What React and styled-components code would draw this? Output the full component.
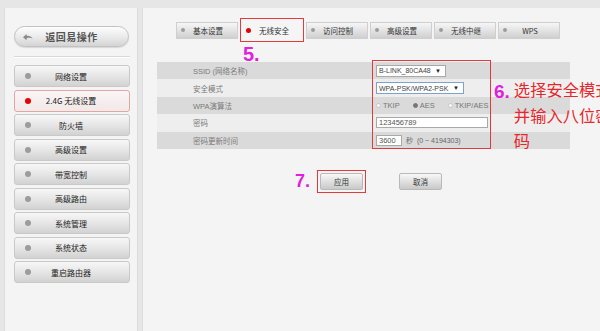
import React from 'react';
import styled, { createGlobalStyle } from 'styled-components';

const GlobalStyle = createGlobalStyle`
    html, body {
        margin: 0;
        padding: 0;
        background: #e6e6e6;
        overflow: hidden;
    }
    body {
        font-family: "Liberation Sans", "Noto Sans CJK SC", sans-serif;
    }
`;

const Page = styled.div`
    display: flex;
    gap: 4px;
    height: 331px;
    box-sizing: border-box;
    padding: 8px 0 0 4px;
`;

const Sidebar = styled.aside`
    width: 134px;
    flex-shrink: 0;
    box-sizing: border-box;
    background: #f4f4f4;
    border-left: 1px solid #dcdcdc;
    border-right: 1px solid #dcdcdc;
    padding: 18px 7px 0 9px;
`;

const BackButton = styled.div`
    height: 21px;
    width: 115px;
    box-sizing: border-box;
    display: flex;
    align-items: center;
    padding: 0 18px 0 8px;
    border: 1px solid #c2c2c2;
    border-radius: 11px;
    background: linear-gradient(#fdfdfd, #e9e9e9 55%, #d4d4d4);
    box-shadow: 0 1px 1px rgba(0, 0, 0, 0.12);
`;

const BackText = styled.span`
    flex: 1;
    text-align: center;
    font-family: "Noto Sans CJK SC", sans-serif;
    font-size: 10px;
    font-weight: 700;
    color: #555;
    letter-spacing: 0.5px;
`;

const Divider = styled.div`
    height: 1px;
    width: 116px;
    background: #d8d8d8;
    border-bottom: 1px solid #fff;
    margin: 9px 0 7px;
`;

const Menu = styled.nav`
    display: flex;
    flex-direction: column;
    gap: 2.5px;
`;

const MenuItem = styled.div`
    height: 22px;
    width: 116px;
    box-sizing: border-box;
    display: flex;
    align-items: center;
    padding: 0 18px 0 10px;
    border: 1px solid ${p => (p.$active ? '#e6a3a3' : '#c9c9c9')};
    border-radius: 3px;
    background: ${p =>
        p.$active
            ? 'linear-gradient(#fbf5f5, #f1e8e8)'
            : 'linear-gradient(#f7f7f7, #e6e6e6 50%, #d2d2d2)'};
`;

const Dot = styled.span`
    width: ${p => p.$size || 6}px;
    height: ${p => p.$size || 6}px;
    border-radius: 50%;
    flex-shrink: 0;
    background: ${p => (p.$active ? '#e80000' : '#9c9c9c')};
`;

const MenuLabel = styled.span`
    flex: 1;
    text-align: center;
    font-family: "Noto Sans CJK SC", sans-serif;
    font-size: 8px;
    color: #222;
`;

const Main = styled.main`
    flex: 1;
    background: #f4f4f4;
    border-left: 1px solid #dedede;
    display: flex;
    flex-direction: column;
    padding-top: 10px;
`;

const Tabs = styled.div`
    display: flex;
    align-items: center;
    gap: 2px;
    height: 24px;
    margin-left: 33px;
`;

const Tab = styled.div`
    position: relative;
    width: ${p => (p.$active ? 64 : 62)}px;
    height: ${p => (p.$active ? 24 : 17)}px;
    box-sizing: border-box;
    display: flex;
    align-items: center;
    padding: 0 6px 0 ${p => (p.$active ? 5 : 4)}px;
    border: ${p => (p.$active ? '1.5px solid #e03a3a' : '1px solid #cfcfcf')};
    background: ${p =>
        p.$active ? '#f5f5f5' : 'linear-gradient(#f6f6f6, #e3e3e3 50%, #cfcfcf)'};
`;

const TabLabel = styled.span`
    flex: 1;
    text-align: center;
    font-family: "Noto Sans CJK SC", sans-serif;
    font-size: 7.5px;
    color: #333;
`;

const Note = styled.span`
    font-family: "Liberation Sans", sans-serif;
    font-weight: 700;
    color: #e21ee0;
    font-size: ${p => p.$size || 19}px;
    line-height: 1;
`;

const StepFive = styled(Note)`
    position: absolute;
    left: 2px;
    top: 25px;
`;

const FormArea = styled.div`
    position: relative;
    margin: 20px 0 0 14px;
    width: 413px;
`;

const Row = styled.div`
    display: grid;
    grid-template-columns: 218px 1fr;
    align-items: center;
    height: 17.4px;
    background: ${p => (p.$dark ? '#dadada' : '#eeeeee')};
`;

const Label = styled.span`
    padding-left: 36px;
    font-family: "Liberation Sans", "Noto Sans CJK SC", sans-serif;
    font-size: 7.5px;
    color: #7a7a7a;
`;

const Value = styled.div`
    display: flex;
    align-items: center;
    gap: 4px;
    padding-left: 1px;
    font-size: 7px;
    color: #666;
    white-space: nowrap;
`;

const Select = styled.div`
    height: 12px;
    width: ${p => p.$width}px;
    flex-shrink: 0;
    box-sizing: border-box;
    display: flex;
    align-items: center;
    justify-content: space-between;
    padding: 0 4px 0 2px;
    background: #fff;
    border: 1px solid ${p => (p.$focus ? '#7da2ce' : '#a9a9a9')};
    font-size: 7px;
    color: #444;
    white-space: nowrap;
`;

const Caret = styled.span`
    font-size: 6px;
    color: #222;
`;

const Radio = styled.label`
    display: flex;
    align-items: center;
    gap: 2px;
    margin-right: 9px;
    font-size: 7.5px;
    color: #777;
`;

const RadioCircle = styled.span`
    width: 5px;
    height: 5px;
    border-radius: 50%;
    box-sizing: border-box;
    border: 1px solid ${p => (p.$on ? '#777' : '#c4c4c4')};
    background: ${p => (p.$on ? '#777' : '#fff')};
`;

const Input = styled.div`
    height: 11px;
    width: ${p => p.$width}px;
    flex-shrink: 0;
    box-sizing: border-box;
    display: flex;
    align-items: center;
    padding-left: 2px;
    background: #fff;
    border: 1px solid #a9a9a9;
    font-size: 7.5px;
    color: #555;
`;

const Highlight = styled.div`
    position: absolute;
    left: 215px;
    top: -2px;
    width: 119px;
    height: 89px;
    box-sizing: border-box;
    border: 1.5px solid #e03a3a;
    pointer-events: none;
`;

const Callout = styled.div`
    position: absolute;
    left: 337px;
    top: 20px;
    display: flex;
    align-items: flex-start;
    gap: 4px;
`;

const CalloutText = styled.span`
    width: 98px;
    font-family: "Noto Sans CJK SC", sans-serif;
    font-size: 16.3px;
    line-height: 25.5px;
    color: #e8262c;
    margin-top: -5px;
`;

const Actions = styled.div`
    display: flex;
    align-items: center;
    margin: 21px 0 0 152px;
`;

const ButtonFrame = styled.div`
    padding: 2px;
    margin-left: 7px;
    border: ${p => (p.$marked ? '1.5px solid #e03a3a' : '1.5px solid transparent')};
    & + & {
        margin-left: 30px;
    }
`;

const Button = styled.div`
    width: 41px;
    height: 15px;
    display: flex;
    align-items: center;
    justify-content: center;
    border: 1px solid #b9b9b9;
    border-radius: 2px;
    background: linear-gradient(#f8f8f8, #e0e0e0 50%, #c9c9c9);
    font-family: "Noto Sans CJK SC", sans-serif;
    font-size: 7.5px;
    color: #333;
`;

const menu = ['网络设置', '2.4G 无线设置', '防火墙', '高级设置', '带宽控制', '高级路由', '系统管理', '系统状态', '重启路由器'];
const tabs = ['基本设置', '无线安全', '访问控制', '高级设置', '无线中继', 'WPS'];

function BackIcon() {
    return (
        <svg width="10" height="8" viewBox="0 0 10 8">
            <path d="M0 4.2 L3.6 1 L3.6 2.9 C6.5 2.7 8.6 3.6 9.8 6.2 C8.4 4.9 6.6 4.5 3.6 5.2 L3.6 7.2 Z" fill="#8a8a8a" />
        </svg>
    );
}

export default function App() {
    return (
        <React.Fragment>
            <GlobalStyle />
            <Page>
                <Sidebar>
                    <BackButton>
                        <BackIcon />
                        <BackText>返回易操作</BackText>
                    </BackButton>
                    <Divider />
                    <Menu>
                        {menu.map((item, i) => (
                            <MenuItem key={item} $active={i === 1}>
                                <Dot $active={i === 1} />
                                <MenuLabel>{item}</MenuLabel>
                            </MenuItem>
                        ))}
                    </Menu>
                </Sidebar>
                <Main>
                    <Tabs>
                        {tabs.map((tab, i) => (
                            <Tab key={tab} $active={i === 1}>
                                <Dot $active={i === 1} $size={i === 1 ? 5 : 4} />
                                <TabLabel>{tab}</TabLabel>
                                {i === 1 && <StepFive $size={20}>5.</StepFive>}
                            </Tab>
                        ))}
                    </Tabs>
                    <FormArea>
                        <Row $dark>
                            <Label>SSID (网络名称)</Label>
                            <Value>
                                <Select $width={70}>B-LINK_80CA48 <Caret>▼</Caret></Select>
                            </Value>
                        </Row>
                        <Row>
                            <Label>安全模式</Label>
                            <Value>
                                <Select $width={88} $focus>WPA-PSK/WPA2-PSK <Caret>▼</Caret></Select>
                            </Value>
                        </Row>
                        <Row $dark>
                            <Label>WPA演算法</Label>
                            <Value>
                                <Radio><RadioCircle />TKIP</Radio>
                                <Radio><RadioCircle $on />AES</Radio>
                                <Radio><RadioCircle />TKIP/AES</Radio>
                            </Value>
                        </Row>
                        <Row>
                            <Label>密码</Label>
                            <Value>
                                <Input $width={112}>123456789</Input>
                            </Value>
                        </Row>
                        <Row $dark>
                            <Label>密码更新时间</Label>
                            <Value>
                                <Input $width={26}>3600</Input>
                                <span>秒&nbsp;&nbsp;(0 ~ 4194303)</span>
                            </Value>
                        </Row>
                        <Highlight />
                        <Callout>
                            <Note $size={19}>6.</Note>
                            <CalloutText>选择安全模式并输入八位密码</CalloutText>
                        </Callout>
                    </FormArea>
                    <Actions>
                        <Note $size={18}>7.</Note>
                        <ButtonFrame $marked>
                            <Button>应用</Button>
                        </ButtonFrame>
                        <ButtonFrame>
                            <Button>取消</Button>
                        </ButtonFrame>
                    </Actions>
                </Main>
            </Page>
        </React.Fragment>
    );
}
